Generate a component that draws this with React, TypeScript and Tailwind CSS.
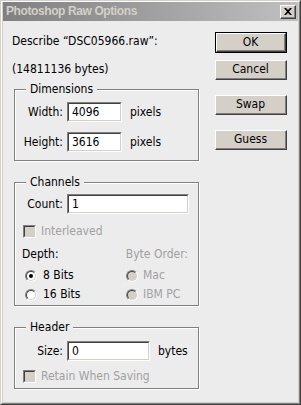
import React from 'react';

function Btn({ label, primary }: { label: string; primary?: boolean }) {
  const face = (
    <div className="h-full w-full border border-t-white border-l-white border-r-[#404040] border-b-[#404040] bg-[#d4d0c8]">
      <div className="h-full w-full border-r border-b border-r-[#808080] border-b-[#808080] flex items-center justify-center text-black">
        {label}
      </div>
    </div>
  );
  if (primary) {
    return <div className="h-[21px] w-[72px] border border-black">{face}</div>;
  }
  return <div className="h-[20px] w-[72px]">{face}</div>;
}

function Field({ value, width }: { value: string; width: string }) {
  return (
    <div className={`${width} h-[20px] border border-t-[#808080] border-l-[#808080] border-r-white border-b-white`}>
      <div className="h-full border border-t-[#404040] border-l-[#404040] border-r-[#d4d0c8] border-b-[#d4d0c8] bg-white pl-[3px] leading-[16px] text-black">
        {value}
      </div>
    </div>
  );
}

function Radio({ checked, disabled }: { checked?: boolean; disabled?: boolean }) {
  return (
    <div className="h-[12px] w-[12px] rounded-full border border-t-[#808080] border-l-[#808080] border-r-white border-b-white">
      <div
        className={`flex h-full w-full items-center justify-center rounded-full border border-t-[#404040] border-l-[#404040] border-r-[#d4d0c8] border-b-[#d4d0c8] ${
          disabled ? 'bg-[#d4d0c8]' : 'bg-white'
        }`}
      >
        {checked && <div className="h-[4px] w-[4px] rounded-full bg-black" />}
      </div>
    </div>
  );
}

function Check() {
  return (
    <div className="h-[13px] w-[13px] border border-t-[#808080] border-l-[#808080] border-r-white border-b-white">
      <div className="h-full w-full border border-t-[#404040] border-l-[#404040] border-r-[#d4d0c8] border-b-[#d4d0c8] bg-[#d4d0c8]" />
    </div>
  );
}

function Group({ title, children, className }: { title: string; children: React.ReactNode; className?: string }) {
  return (
    <fieldset className={`border border-[#808080] shadow-[inset_1px_1px_0_#fff,1px_1px_0_#fff] ${className ?? ''}`}>
      <legend className="ml-[11px] bg-[#ececec] px-[4px] leading-[15px] text-black">{title}</legend>
      {children}
    </fieldset>
  );
}

export default function App() {
  return (
    <div className="h-[405px] w-[301px] border border-t-[#d4d0c8] border-l-[#d4d0c8] border-r-[#404040] border-b-[#404040] bg-[#d4d0c8] font-['DejaVu_Sans_Condensed','Liberation_Sans',sans-serif] text-[12px] leading-[15px]">
      <div className="flex h-full flex-col border border-t-white border-l-white border-r-[#808080] border-b-[#808080] px-[1px] pb-[1px]">
        {/* title bar */}
        <div className="flex h-[19px] shrink-0 items-center bg-gradient-to-r from-[#808080] to-[#c0c0c0] pl-[3px] pr-[2px]">
          <span className="flex-1 font-['Liberation_Sans',sans-serif] font-bold tracking-[-0.4px] text-[#d4d0c8]">Photoshop Raw Options</span>
          <div className="h-[14px] w-[16px] border border-t-white border-l-white border-r-[#404040] border-b-[#404040] bg-[#d4d0c8]">
            <div className="flex h-full w-full items-center justify-center border-r border-b border-r-[#808080] border-b-[#808080]">
              <svg width="8" height="7" viewBox="0 0 8 7">
                <path d="M0 0h2l2 2 2-2h2L5 3.5 8 7H6L4 5 2 7H0l3-3.5z" fill="#000" />
              </svg>
            </div>
          </div>
        </div>

        {/* body */}
        <div className="flex flex-1 bg-[#ececec] pl-[11px] pt-[13px] text-black">
          <div className="flex w-[185px] flex-col">
            <div className="-ml-[2px]">Describe “DSC05966.raw”:</div>
            <div className="-ml-[2px] mt-[13px]">(14811136 bytes)</div>

            <Group title="Dimensions" className="mt-[5px] pb-[8px]">
              <div className="mt-[5px] flex items-center">
                <span className="w-[48px] text-right">Width:</span>
                <div className="ml-[4px]">
                  <Field value="4096" width="w-[55px]" />
                </div>
                <span className="ml-[8px]">pixels</span>
              </div>
              <div className="mt-[10px] flex items-center">
                <span className="w-[48px] text-right">Height:</span>
                <div className="ml-[4px]">
                  <Field value="3616" width="w-[55px]" />
                </div>
                <span className="ml-[8px]">pixels</span>
              </div>
            </Group>

            <Group title="Channels" className="mt-[14px] pb-[3px]">
              <div className="mt-[4px] flex items-center">
                <span className="w-[48px] text-right">Count:</span>
                <div className="ml-[4px]">
                  <Field value="1" width="w-[122px]" />
                </div>
              </div>
              <div className="mt-[10px] flex items-center pl-[8px] text-[#a0a0a0]">
                <Check />
                <span className="ml-[5px]">Interleaved</span>
              </div>
              <div className="mt-[8px] flex justify-between pl-[7px] pr-[10px]">
                <span>Depth:</span>
                <span className="text-[#a0a0a0]">Byte Order:</span>
              </div>
              <div className="mt-[6px] flex flex-col gap-[4px]">
                <div className="flex">
                  <div className="flex w-[111px] items-center pl-[10px]">
                    <Radio checked />
                    <span className="ml-[6px]">8 Bits</span>
                  </div>
                  <div className="flex items-center text-[#a0a0a0]">
                    <Radio disabled />
                    <span className="ml-[5px]">Mac</span>
                  </div>
                </div>
                <div className="flex">
                  <div className="flex w-[111px] items-center pl-[10px]">
                    <Radio />
                    <span className="ml-[6px]">16 Bits</span>
                  </div>
                  <div className="flex items-center text-[#a0a0a0]">
                    <Radio disabled />
                    <span className="ml-[5px]">IBM PC</span>
                  </div>
                </div>
              </div>
            </Group>

            <Group title="Header" className="mt-[14px] pb-[4px]">
              <div className="mt-[6px] flex items-center">
                <span className="w-[48px] text-right">Size:</span>
                <div className="ml-[4px]">
                  <Field value="0" width="w-[83px]" />
                </div>
                <span className="ml-[8px]">bytes</span>
              </div>
              <div className="mt-[8px] flex items-center pl-[8px] text-[#a0a0a0]">
                <Check />
                <span className="ml-[5px]">Retain When Saving</span>
              </div>
            </Group>
          </div>

          <div className="ml-[16px] flex flex-col">
            <div className="-mt-[2px]">
              <Btn label="OK" primary />
            </div>
            <div className="mt-[7px]">
              <Btn label="Cancel" />
            </div>
            <div className="mt-[15px]">
              <Btn label="Swap" />
            </div>
            <div className="mt-[15px]">
              <Btn label="Guess" />
            </div>
          </div>
        </div>
      </div>
    </div>
  );
}
